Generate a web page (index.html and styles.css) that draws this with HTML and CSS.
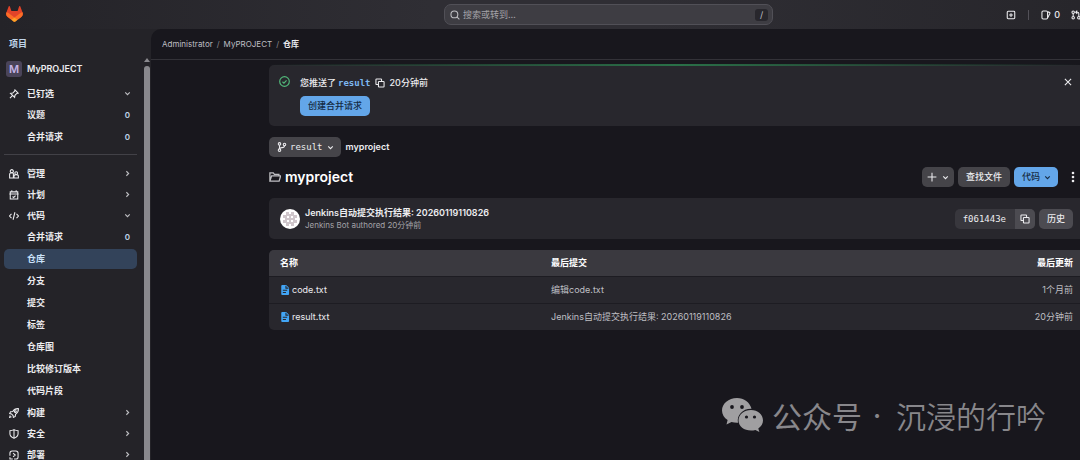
FILE: index.html
```html
<!DOCTYPE html>
<html lang="zh-CN">
<head>
<meta charset="utf-8">
<meta name="viewport" content="width=device-width, initial-scale=1">
<title>仓库 · MyPROJECT</title>
<link rel="stylesheet" href="styles.css">
</head>
<body>
<svg class="sprite" aria-hidden="true">
  <symbol id="chev-d" viewBox="0 0 16 16"><path d="M4 6l4 4 4-4"/></symbol>
  <symbol id="chev-r" viewBox="0 0 16 16"><path d="M6 4l4 4-4 4"/></symbol>
  <symbol id="copy" viewBox="0 0 16 16"><path d="M5 10.500H2.500a1 1 0 0 1-1-1v-7a1 1 0 0 1 1-1h7a1 1 0 0 1 1 1V5"/><rect x="5.500" y="5.500" width="9" height="9" rx="1"/></symbol>
  <symbol id="doc" viewBox="0 0 16 16"><path fill="#42a5f5" stroke="none" d="M3.500 0H10l4.500 4.500v10A1.500 1.500 0 0 1 13 16H3.500A1.500 1.500 0 0 1 2 14.500v-13A1.500 1.500 0 0 1 3.500 0z"/><path stroke="#28272d" d="M9.500 1v4h4M4.500 8.500h7M4.500 12h5"/></symbol>
</svg>
<div class="app">
  <header class="topbar">
    <a class="logo" href="#" aria-label="GitLab">
      <svg viewBox="0 0 25 24"><path fill="#e24329" d="m24.500 9.500-.03-.09L21.080.560a.9.9 0 0 0-1.700.09l-2.250 6.900H7.830L5.580.650a.9.9 0 0 0-1.700-.09L.490 9.400l-.03.090a6.300 6.300 0 0 0 2.090 7.280l.3.230 5.080 3.800 4.550 3.190 4.550-3.190 5.110-3.830a6.300 6.300 0 0 0 2.360-7.470z"/><path fill="#fc6d26" d="m24.500 9.500-.03-.09a11.400 11.400 0 0 0-4.560 2.050l-7.430 5.620 4.740 3.580 5.110-3.830a6.300 6.300 0 0 0 2.170-7.330zM.490 9.400l-.03.100a6.300 6.300 0 0 0 2.390 7.500l5.080 3.800 4.550-3.720-7.430-5.620A11.400 11.400 0 0 0 .490 9.400z"/><path fill="#fca326" d="m7.740 20.660 3.690 2.790c.650.480 1.400.480 2.050 0l3.740-2.790-4.740-3.580z"/></svg>
    </a>
    <label class="search">
      <svg class="icon" viewBox="0 0 16 16"><circle cx="7" cy="7" r="5.500"/><path d="M11 11l4 4"/></svg>
      <input type="search" placeholder="搜索或转到…" aria-label="搜索或转到">
      <kbd>/</kbd>
    </label>
    <div class="top-actions">
      <button class="bare" aria-label="新建"><svg class="icon" viewBox="0 0 16 16"><rect x="2" y="2" width="12" height="12" rx="1.500"/><path d="M8 5v6M5 8h6"/></svg></button>
      <span class="rule"></span>
      <button class="bare count"><svg class="icon" viewBox="0 0 16 16"><rect x="1.500" y="1.500" width="9" height="13" rx="2"/><path d="M11 3l2.500 .8a1 1 0 0 1 .8 1.400L11 12"/></svg>0</button>
      <button class="bare merge" aria-label="合并请求"><svg class="icon" viewBox="0 0 16 16"><circle cx="3.500" cy="3.500" r="2"/><circle cx="3.500" cy="12.500" r="2"/><circle cx="12.500" cy="12.500" r="2"/><path d="M3.500 5.500v5M12.500 10.500v-5q0-2-2-2H8M10 1L7.500 3.500 10 6"/></svg></button>
    </div>
  </header>

  <div class="sidebar">
    <nav class="side-nav" aria-label="项目导航">
      <h2>项目</h2>
      <a class="project" href="#"><span class="avatar">M</span>MyPROJECT</a>
      <ul>
        <li><a class="item" href="#"><svg class="icon" viewBox="0 0 16 16"><path d="M9.500 1.500l5 5-2 .5-3 3-.5 3.500-6.500-6.500L6 6.500l3-3zM5.500 10.500L1.500 14.500"/></svg><span>已钉选</span><svg class="icon chev"><use href="#chev-d"/></svg></a>
          <ul class="sub">
            <li><a class="item" href="#"><span>议题</span><b>0</b></a></li>
            <li><a class="item" href="#"><span>合并请求</span><b>0</b></a></li>
          </ul>
        </li>
      </ul>
      <hr>
      <ul>
        <li><a class="item" href="#"><svg class="icon" viewBox="0 0 16 16"><circle cx="4.500" cy="3.500" r="2.500"/><circle cx="11.500" cy="6.500" r="2.200"/><path d="M7 14.500H1V8.500q0-2.500 3.500-2.500 2 0 2.500 1zM8 14.500h7v-3q0-2.500-3.500-2.500T8 11.500z"/></svg><span>管理</span><svg class="icon chev"><use href="#chev-r"/></svg></a></li>
        <li><a class="item" href="#"><svg class="icon" viewBox="0 0 16 16"><path d="M2 3h12v11.500H2zM0.500 6.500h15M4.500 0.500V3M11.500 0.500V3M5.500 10.500l2 1.500 3-3"/></svg><span>计划</span><svg class="icon chev"><use href="#chev-r"/></svg></a></li>
        <li><a class="item" href="#"><svg class="icon" viewBox="0 0 16 16"><path d="M4 4.500L.8 8 4 11.500M12 4.500L15.200 8 12 11.500M9.500 2l-3 12"/></svg><span>代码</span><svg class="icon chev"><use href="#chev-d"/></svg></a>
          <ul class="sub">
            <li><a class="item" href="#"><span>合并请求</span><b>0</b></a></li>
            <li><a class="item active" href="#" aria-current="page"><span>仓库</span></a></li>
            <li><a class="item" href="#"><span>分支</span></a></li>
            <li><a class="item" href="#"><span>提交</span></a></li>
            <li><a class="item" href="#"><span>标签</span></a></li>
            <li><a class="item" href="#"><span>仓库图</span></a></li>
            <li><a class="item" href="#"><span>比较修订版本</span></a></li>
            <li><a class="item" href="#"><span>代码片段</span></a></li>
          </ul>
        </li>
        <li><a class="item" href="#"><svg class="icon" viewBox="0 0 16 16"><path d="M15 1q-6-.5-9 4.500L2.500 6 1 9l3 .5L6.500 12l.5 3 3-1.500.5-3.500Q15.500 7 15 1zM2 12l-1 3 3-1"/><circle cx="10.200" cy="5.800" r="1.500"/></svg><span>构建</span><svg class="icon chev"><use href="#chev-r"/></svg></a></li>
        <li><a class="item" href="#"><svg class="icon" viewBox="0 0 16 16"><path d="M8 1q3 1.700 6.500 1.700V8q0 4-6.500 7Q1.500 12 1.500 8V2.700Q5 2.700 8 1zM8 1v14"/></svg><span>安全</span><svg class="icon chev"><use href="#chev-r"/></svg></a></li>
        <li><a class="item" href="#"><svg class="icon" viewBox="0 0 16 16"><path d="M1.500 9V5q0-3.500 3.500-3.500h6q3.500 0 3.500 3.500v6q0 3.500-3.500 3.500H8M6 14.500H1.500v-3M6.500 5l3.500 3-3.500 3"/></svg><span>部署</span><svg class="icon chev"><use href="#chev-r"/></svg></a></li>
      </ul>
    </nav>
    <div class="scrollbar" aria-hidden="true"><i class="arrow"></i><i class="thumb"></i></div>
  </div>

  <main class="panel">
    <nav class="crumbs" aria-label="面包屑">
      <a href="#">Administrator</a><i>/</i><a href="#">MyPROJECT</a><i>/</i><a class="current" href="#">仓库</a>
    </nav>
    <div class="content">
      <section class="alert">
        <svg class="icon ok" viewBox="0 0 16 16"><circle cx="8" cy="8" r="7"/><path d="M5 8.300l2.200 2 3.800-4"/></svg>
        <div class="alert-body">
          <p>您推送了 <a class="mono" href="#">result</a><button class="bare" aria-label="复制"><svg class="icon"><use href="#copy"/></svg></button>20分钟前</p>
          <button class="btn primary">创建合并请求</button>
        </div>
        <button class="bare close" aria-label="关闭"><svg class="icon" viewBox="0 0 16 16"><path d="M3 3l10 10M13 3L3 13"/></svg></button>
      </section>

      <div class="ref-row">
        <button class="btn mono"><svg class="icon" viewBox="0 0 16 16"><circle cx="4" cy="3" r="2"/><circle cx="12" cy="4" r="2"/><circle cx="4" cy="13" r="2"/><path d="M4 5v6M12 6q0 3-4 3-3.500 0-4 2"/></svg>result<svg class="icon chev"><use href="#chev-d"/></svg></button>
        <a href="#">myproject</a>
      </div>

      <div class="title-row">
        <svg class="icon folder" viewBox="0 0 16 16"><path d="M1.200 13.500v-11h4.500l1.500 2h6v2M1.200 13.500l2.300-7h12l-2 7z"/></svg>
        <h1>myproject</h1>
        <div class="tools">
          <button class="btn add" aria-label="添加"><svg class="icon" viewBox="0 0 16 16"><path d="M8 1v14M1 8h14"/></svg><svg class="icon chev"><use href="#chev-d"/></svg></button>
          <button class="btn">查找文件</button>
          <button class="btn primary code">代码<svg class="icon chev"><use href="#chev-d"/></svg></button>
          <button class="bare kebab" aria-label="更多"><svg viewBox="0 0 4 12"><circle cx="2" cy="2" r="1.300"/><circle cx="2" cy="6" r="1.300"/><circle cx="2" cy="10" r="1.300"/></svg></button>
        </div>
      </div>

      <section class="commit">
        <svg class="face" viewBox="0 0 20 20"><circle cx="10" cy="10" r="10" fill="#fff"/><path fill="#cfc6cb" d="M6 3h3v2h2V3h3v3h3v3h-2v2h2v3h-3v3h-3v-2H9v2H6v-3H3v-3h2V9H3V6h3z"/><path fill="#fff" d="M7 7h2v2H7zM11 7h2v2h-2zM7 11h2v2H7zM11 11h2v2h-2z"/></svg>
        <div class="commit-text">
          <a href="#">Jenkins自动提交执行结果: 20260119110826</a>
          <p>Jenkins Bot authored 20分钟前</p>
        </div>
        <div class="sha"><span class="mono">f061443e</span><button class="btn" aria-label="复制提交 SHA"><svg class="icon"><use href="#copy"/></svg></button></div>
        <button class="btn history">历史</button>
      </section>

      <table class="files">
        <thead><tr><th>名称</th><th>最后提交</th><th>最后更新</th></tr></thead>
        <tbody>
          <tr><td><a href="#"><svg class="icon"><use href="#doc"/></svg>code.txt</a></td><td>编辑code.txt</td><td>1个月前</td></tr>
          <tr><td><a href="#"><svg class="icon"><use href="#doc"/></svg>result.txt</a></td><td>Jenkins自动提交执行结果: 20260119110826</td><td>20分钟前</td></tr>
        </tbody>
      </table>
    </div>
  </main>
</div>
<div class="watermark">
  <svg viewBox="0 0 41 34"><path d="M15 0C6.500 0 0 5.600 0 12.500c0 4 2.200 7.300 5.600 9.600L4.500 26.500l5-2.500c1.800.5 3.600.8 5.500.8h1C14.500 17 21 10.500 29.500 10.800 28 4.500 22 0 15 0z"/><path d="M29 12c-7 0-12.500 4.600-12.500 10.500S22 32.500 29 32.500c1.500 0 3-.2 4.400-.6l4 2.100-1.100-3.600c2.900-2 4.700-4.700 4.700-7.900C41 16.600 35.800 12 29 12z"/><g fill="#18171d"><circle cx="10" cy="9" r="1.900"/><circle cx="20" cy="9" r="1.900"/><circle cx="24.500" cy="19" r="1.600"/><circle cx="32.500" cy="19" r="1.600"/></g></svg>
  <span>公众号</span><span class="dot">·</span><span class="name">沉浸的行吟</span>
</div>
</body>
</html>
```
FILE: styles.css
```css
* { box-sizing: border-box; }
body {
  margin: 0;
  overflow: hidden;
  background: #242328;
  color: #ececef;
  font: 9px/12px Inter, "Noto Sans CJK SC", sans-serif;
}
a { color: inherit; text-decoration: none; }
ul { list-style: none; margin: 0; padding: 0; }
p, h1, h2 { margin: 0; }
button { font: inherit; color: inherit; border: 0; cursor: pointer; }
.sprite { display: none; }
.icon {
  width: 10px;
  height: 10px;
  flex: none;
  fill: none;
  stroke: currentColor;
  stroke-width: 1.7;
}
.chev { width: 9px; height: 9px; stroke-width: 2; }
.mono { font-family: "DejaVu Sans Mono", monospace; }
.bare { display: inline-flex; align-items: center; padding: 0; background: none; }

.app {
  display: grid;
  grid-template: 29px 1fr / 151px 1fr;
  height: 100vh;
}

/* Top bar */
.topbar {
  grid-column: 1 / -1;
  display: grid;
  grid-template-columns: 444fr 329fr 307fr;
  align-items: center;
  background: linear-gradient(90deg, #242328, #2f2e34 40%, #2f2e34 60%, #27262b);
}
.logo { padding-left: 6px; height: 18px; }
.logo svg { width: 17px; height: 16px; }
.search {
  display: flex;
  align-items: center;
  gap: 3px;
  height: 21px;
  padding: 0 4px 0 5px;
  border: 1px solid #515057;
  border-radius: 7px;
  background: #3e3d43;
  color: #bfbfc3;
}
.search input {
  flex: 1;
  min-width: 0;
  padding: 0;
  border: 0;
  outline: 0;
  background: none;
  color: inherit;
  font: inherit;
}
.search input::placeholder { color: #a4a3a8; opacity: 1; }
.search kbd {
  width: 13px;
  border-radius: 3px;
  background: #28272d;
  font: inherit;
  text-align: center;
}
.top-actions {
  display: flex;
  align-items: center;
  justify-content: flex-end;
  overflow: hidden;
  gap: 12px;
}
.rule { width: 1px; height: 10px; background: #535158; }
.count { gap: 3px; font-weight: 500; }
.merge { width: 9px; overflow: hidden; margin-left: -1px; }

/* Sidebar */
.sidebar { display: flex; min-height: 0; overflow: hidden; }
.side-nav { flex: 1; padding: 8px 0 0 4px; font-weight: 700; }
.side-nav h2 { padding-left: 5px; font-size: 9px; line-height: 13px; color: #c0d5ea; }
.project {
  display: flex;
  align-items: center;
  gap: 5px;
  height: 22px;
  margin: 8px 0 3px;
  padding-left: 2px;
  font-weight: 600;
}
.avatar {
  width: 16px;
  border-radius: 3px;
  background: #4a4459;
  color: #c5b5e6;
  font-size: 11px;
  line-height: 16px;
  text-align: center;
}
.item {
  display: flex;
  align-items: center;
  gap: 8px;
  height: 21px;
  padding: 0 5px;
  border-radius: 5px;
}
.item span { flex: 1; }
.item .chev { color: #bfbfc3; }
.item b { width: 9px; font-size: 8px; font-weight: 600; text-align: center; color: #c0d5ea; }
.sub li { padding: 1px 0; }
.sub .item { height: 20px; padding-left: 23px; }
.active { background: #33435a; color: #cbe2f9; }
.side-nav hr { height: 1px; margin: 6px 0 8px; border: 0; background: #424147; }
.scrollbar {
  display: flex;
  flex-direction: column;
  gap: 4px;
  width: 14px;
  padding: 29px 1px 0 7px;
}
.arrow {
  width: 6px;
  border: 3px solid transparent;
  border-top: 0;
  border-bottom: 4px solid #8a898e;
}
.thumb { flex: 1; width: 6px; border-radius: 3px 3px 0 0; background: #89888d; }

/* Main panel */
.panel { min-width: 0; border-radius: 10px 0 0 0; background: #18171d; }
.crumbs {
  display: flex;
  align-items: center;
  gap: 4px;
  height: 31px;
  padding-left: 11px;
  border-bottom: 1px solid #333238;
  font-size: 8px;
  color: #bfbfc3;
}
.crumbs i { font-style: normal; color: #89888d; }
.crumbs .current { font-weight: 700; color: #ececef; }
.content { padding: 5px 0 0 118px; }

.alert {
  position: relative;
  display: flex;
  align-items: flex-start;
  gap: 10px;
  padding: 11px 7px 10px 10px;
  border-radius: 5px 0 0 5px;
  background: #28272d;
}
.alert::before {
  content: "";
  position: absolute;
  inset: -1px 0 auto;
  height: 2px;
  background: linear-gradient(90deg, transparent, #2a7048 50%, transparent);
}
.ok { width: 11px; height: 11px; color: #52b87a; }
.alert-body { flex: 1; }
.alert p { display: flex; align-items: center; height: 13px; margin-bottom: 7px; font-weight: 500; }
.alert p a { margin-left: 2px; color: #7db8f2; font-weight: 700; }
.alert p .bare { margin: 0 5px 0 4px; }
.close { height: 12px; }

.btn {
  display: inline-flex;
  align-items: center;
  justify-content: center;
  gap: 4px;
  height: 20px;
  padding: 0 8px;
  border-radius: 5px;
  background: #454449;
  font-weight: 500;
}
.btn.mono { font-family: "DejaVu Sans Mono", monospace; font-weight: 400; }
.btn.primary { background: #63a6e9; color: #152b43; }

.ref-row { display: flex; align-items: center; gap: 5px; margin-top: 11px; font-weight: 600; }
.ref-row .btn { padding: 0 6px 0 8px; gap: 3px; }
.title-row { display: flex; align-items: center; gap: 4px; margin-top: 10px; }
.folder { width: 12px; height: 12px; color: #bfbfc3; }
h1 { font-size: 14px; line-height: 20px; font-weight: 600; color: #fff; }
.tools { display: flex; gap: 4px; margin-left: auto; padding-right: 5px; }
.add { padding: 0 4px 0 5px; }
.code { padding: 0 6px 0 8px; gap: 3px; }
.kebab { margin-left: 9px; }
.kebab svg { width: 4px; height: 12px; fill: currentColor; }

.commit {
  display: flex;
  align-items: center;
  gap: 4px;
  height: 41px;
  margin-top: 11px;
  padding: 0 7px 0 11px;
  border-radius: 5px 0 0 5px;
  background: #28272d;
}
.face { width: 20px; height: 20px; flex: none; }
.commit-text { flex: 1; padding-left: 1px; font-weight: 600; }
.commit-text p { font-size: 8px; font-weight: 400; color: #a4a3a8; }
.sha { display: flex; border-radius: 5px; background: #38373d; overflow: hidden; }
.sha .mono { padding: 0 9px 0 8px; line-height: 20px; }
.sha .btn { padding: 0 5px; border-radius: 0; background: #4c4b51; }
.history { background: #4c4b51; }

/* File list */
.files {
  width: 100%;
  margin-top: 11px;
  border-collapse: separate;
  border-spacing: 0;
  border-radius: 5px 0 0 5px;
  background: #28272d;
  overflow: hidden;
  table-layout: fixed;
}
.files th, .files td { height: 27px; padding: 0 7px 0 11px; text-align: left; color: #bfbfc3; }
.files th { height: 26px; background: #3a393f; color: #fff; font-weight: 700; }
.files td { border-top: 1px solid #1d1c22; }
.files th:first-child { width: 271px; }
.files th:last-child { width: 180px; }
.files th:last-child, .files td:last-child { text-align: right; }
.files a { display: flex; align-items: center; gap: 2px; color: #ececef; }

.watermark {
  position: absolute;
  right: 34px;
  bottom: 23px;
  display: flex;
  align-items: center;
  color: #88878b;
  font: 400 30px/44px "Noto Sans CJK SC", sans-serif;
}
.watermark svg { width: 41px; height: 34px; margin-right: 9px; fill: #a09fa1; }
.watermark .dot { width: 30px; font-family: Inter, sans-serif; text-align: center; }
.watermark .name { margin-left: 4px; font-weight: 350; }
```
